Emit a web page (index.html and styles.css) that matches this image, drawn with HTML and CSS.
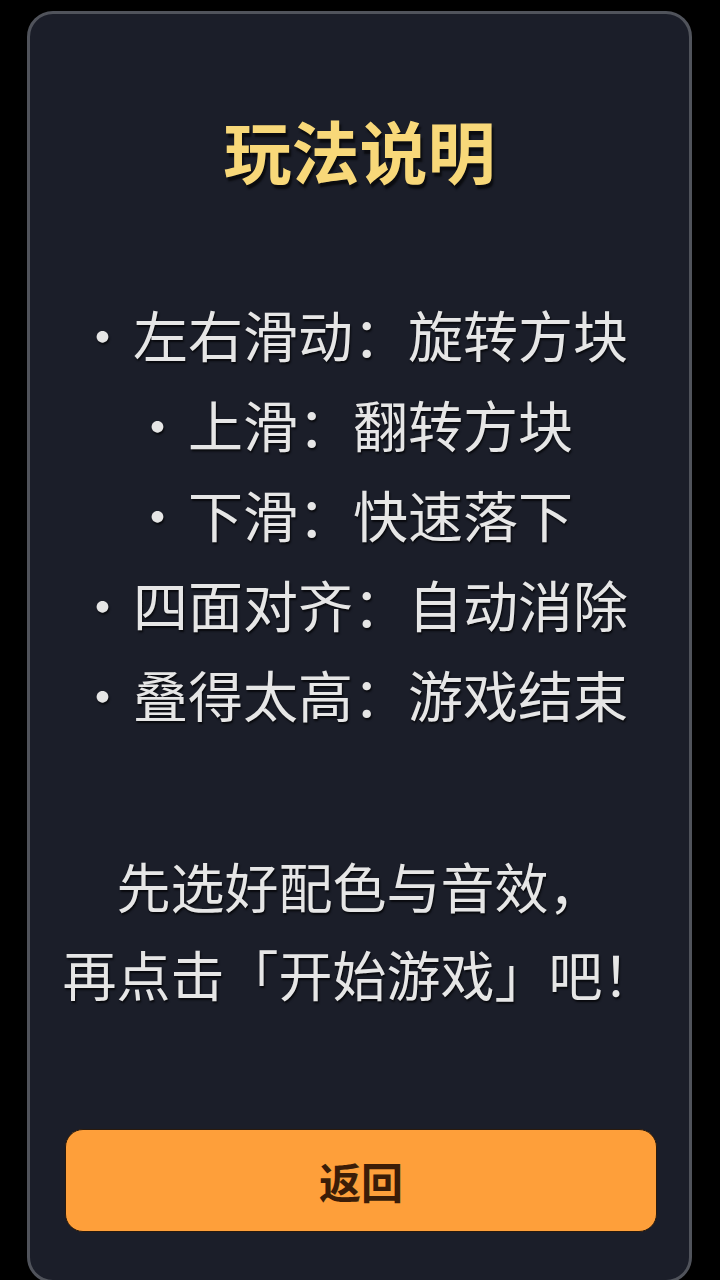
FILE: index.html
```html
<!DOCTYPE html>
<html lang="zh-CN">
<head>
<meta charset="utf-8">
<title>玩法说明</title>
<link rel="stylesheet" href="styles.css">
</head>
<body>
<div class="panel">
  <h1 class="title">玩法说明</h1>
  <ul class="rules">
    <li><span class="dot">·</span>左右滑动：旋转方块</li>
    <li><span class="dot">·</span>上滑：翻转方块</li>
    <li><span class="dot">·</span>下滑：快速落下</li>
    <li><span class="dot">·</span>四面对齐：自动消除</li>
    <li><span class="dot">·</span>叠得太高：游戏结束</li>
  </ul>
  <p class="hint">先选好配色与音效，<br>再点击「开始游戏」吧！</p>
  <button class="back">返回</button>
</div>
</body>
</html>
```

FILE: styles.css
```css
html, body {
  margin: 0;
  padding: 0;
  background: #000;
}
body {
  width: 720px;
  height: 1280px;
  overflow: hidden;
  font-family: "Noto Sans CJK SC", "Noto Sans", sans-serif;
}
.panel {
  box-sizing: border-box;
  width: 665px;
  height: 1272px;
  margin: 11px 0 0 27px;
  border: 3px solid #50535b;
  border-radius: 26px;
  background: #1b1e29;
  display: flex;
  flex-direction: column;
  align-items: center;
  padding-top: 96px;
}
.title {
  margin: 0;
  font-size: 68px;
  line-height: 80px;
  font-weight: 700;
  color: #f8d879;
  text-shadow: 2px 4px 2px #0b0c10;
}
.rules {
  list-style: none;
  margin: 98px 0 0 0;
  padding: 0;
  text-align: center;
  font-size: 55px;
  line-height: 90px;
  font-weight: 400;
  color: #e6e6e6;
  text-shadow: 1px 2px 2px #08090d;
}
.rules li {
  margin: 0;
  padding-right: 16px;
}
.dot {
  display: inline-block;
  width: 58px;
  text-align: left;
}
.hint {
  margin: 104px 0 0 0;
  text-align: center;
  font-size: 54px;
  line-height: 88px;
  font-weight: 400;
  color: #e6e6e6;
  text-shadow: 1px 2px 2px #08090d;
}
.back {
  margin-top: 111px;
  width: 592px;
  height: 103px;
  border: 1.5px solid #2a1a0c;
  border-radius: 18px;
  background: #fe9f3a;
  color: #3b1d08;
  font-family: "Noto Sans CJK SC", "Noto Sans", sans-serif;
  font-size: 42px;
  font-weight: 700;
  padding: 0;
  margin-left: 3px;
}
```
